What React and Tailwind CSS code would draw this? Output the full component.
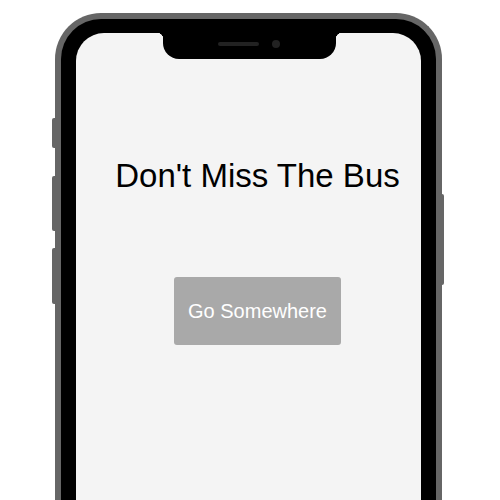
import React from 'react';

const SideButton = ({ className }) => (
  <div className={`absolute w-[3px] bg-[#666666] ${className}`} />
);

const App = () => {
  return (
    <div className="h-[500px] w-[500px] overflow-hidden bg-white pt-[13px] pl-[55px]" style={{ fontFamily: '"Liberation Sans", Arial, sans-serif' }}>
      <div className="relative w-[387px]">
        <SideButton className="-left-[3px] top-[105px] h-[30px] rounded-l-[2px]" />
        <SideButton className="-left-[3px] top-[163px] h-[55px] rounded-l-[2px]" />
        <SideButton className="-left-[3px] top-[235px] h-[56px] rounded-l-[2px]" />
        <SideButton className="-right-[2px] top-[181px] h-[91px] rounded-r-[2px]" />

        <div className="rounded-[46px] border-[6px] border-b-0 border-[#666666] bg-black px-[15px] pt-[14px]">
          <div className="relative h-[620px] rounded-[28px] bg-[#f4f4f4]">
            {/* notch */}
            <div className="absolute left-1/2 top-0 -ml-[86px] flex h-[26px] w-[173px] items-center justify-center gap-[13px] rounded-b-[16px] bg-black pb-[4px]">
              <div className="absolute -left-[6px] top-0 h-[6px] w-[6px] bg-[radial-gradient(circle_at_0_100%,transparent_6px,black_6.5px)]" />
              <div className="absolute -right-[6px] top-0 h-[6px] w-[6px] bg-[radial-gradient(circle_at_100%_100%,transparent_6px,black_6.5px)]" />
              <div className="h-[4px] w-[41px] rounded-full bg-[#222222]" />
              <div className="h-[8px] w-[8px] rounded-full bg-[#222222]" />
            </div>

            <div className="flex flex-col items-center pl-[18px] pt-[126px]">
              <h1 className="text-[33px] leading-none text-black">Don't Miss The Bus</h1>
              <button className="mt-[85px] rounded-[3px] bg-[#a9a9a9] px-[14px] py-[24px] text-[20px] leading-none text-white">
                Go Somewhere
              </button>
            </div>
          </div>
        </div>
      </div>
    </div>
  );
};

export default App;
